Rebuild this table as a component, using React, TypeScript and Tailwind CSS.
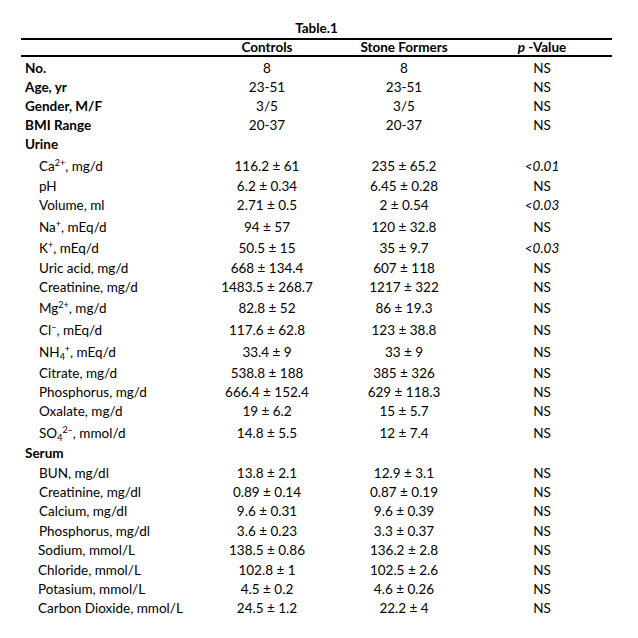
import React from "react";

type Row = {
  label: React.ReactNode;
  c?: string;
  s?: string;
  p?: string;
  h: number;
  kind: "bold" | "sub" | "sub2";
};

const Sup = ({ children }: { children: React.ReactNode }) => (
  <span className="relative -top-[5px] text-[9px] leading-none align-baseline">{children}</span>
);
const Sub = ({ children }: { children: React.ReactNode }) => (
  <span className="relative top-[3px] text-[9px] leading-none align-baseline">{children}</span>
);

const pm = "\u00b1";

const rows: Row[] = [
  { label: "No.", c: "8", s: "8", p: "NS", h: 19, kind: "bold" },
  { label: "Age, yr", c: "23-51", s: "23-51", p: "NS", h: 19, kind: "bold" },
  { label: "Gender, M/F", c: "3/5", s: "3/5", p: "NS", h: 19, kind: "bold" },
  { label: "BMI Range", c: "20-37", s: "20-37", p: "NS", h: 19, kind: "bold" },
  { label: "Urine", h: 22, kind: "bold" },
  { label: <>Ca<Sup>2+</Sup>, mg/d</>, c: `116.2 ${pm} 61`, s: `235 ${pm} 65.2`, p: "<0.01", h: 20, kind: "sub" },
  { label: "pH", c: `6.2 ${pm} 0.34`, s: `6.45 ${pm} 0.28`, p: "NS", h: 19, kind: "sub" },
  { label: "Volume, ml", c: `2.71 ${pm} 0.5`, s: `2 ${pm} 0.54`, p: "<0.03", h: 22, kind: "sub" },
  { label: <>Na<Sup>+</Sup>, mEq/d</>, c: `94 ${pm} 57`, s: `120 ${pm} 32.8`, p: "NS", h: 21, kind: "sub" },
  { label: <>K<Sup>+</Sup>, mEq/d</>, c: `50.5 ${pm} 15`, s: `35 ${pm} 9.7`, p: "<0.03", h: 20, kind: "sub" },
  { label: "Uric acid, mg/d", c: `668 ${pm} 134.4`, s: `607 ${pm} 118`, p: "NS", h: 19, kind: "sub" },
  { label: "Creatinine, mg/d", c: `1483.5 ${pm} 268.7`, s: `1217 ${pm} 322`, p: "NS", h: 21, kind: "sub" },
  { label: <>Mg<Sup>2+</Sup>, mg/d</>, c: `82.8 ${pm} 52`, s: `86 ${pm} 19.3`, p: "NS", h: 22, kind: "sub" },
  { label: <>Cl<Sup>&#8211;</Sup>, mEq/d</>, c: `117.6 ${pm} 62.8`, s: `123 ${pm} 38.8`, p: "NS", h: 22, kind: "sub" },
  { label: <>NH<Sub>4</Sub><Sup>+</Sup>, mEq/d</>, c: `33.4 ${pm} 9`, s: `33 ${pm} 9`, p: "NS", h: 21, kind: "sub" },
  { label: "Citrate, mg/d", c: `538.8 ${pm} 188`, s: `385 ${pm} 326`, p: "NS", h: 19, kind: "sub" },
  { label: "Phosphorus, mg/d", c: `666.4 ${pm} 152.4`, s: `629 ${pm} 118.3`, p: "NS", h: 19, kind: "sub" },
  { label: "Oxalate, mg/d", c: `19 ${pm} 6.2`, s: `15 ${pm} 5.7`, p: "NS", h: 22, kind: "sub" },
  { label: <>SO<Sub>4</Sub><Sup>2&#8211;</Sup>, mmol/d</>, c: `14.8 ${pm} 5.5`, s: `12 ${pm} 7.4`, p: "NS", h: 20, kind: "sub" },
  { label: "Serum", h: 20, kind: "bold" },
  { label: "BUN, mg/dl", c: `13.8 ${pm} 2.1`, s: `12.9 ${pm} 3.1`, p: "NS", h: 19, kind: "sub" },
  { label: "Creatinine, mg/dl", c: `0.89 ${pm} 0.14`, s: `0.87 ${pm} 0.19`, p: "NS", h: 19, kind: "sub" },
  { label: "Calcium, mg/dl", c: `9.6 ${pm} 0.31`, s: `9.6 ${pm} 0.39`, p: "NS", h: 20, kind: "sub" },
  { label: "Phosphorus, mg/dl", c: `3.6 ${pm} 0.23`, s: `3.3 ${pm} 0.37`, p: "NS", h: 19, kind: "sub" },
  { label: "Sodium, mmol/L", c: `138.5 ${pm} 0.86`, s: `136.2 ${pm} 2.8`, p: "NS", h: 20, kind: "sub2" },
  { label: "Chloride, mmol/L", c: `102.8 ${pm} 1`, s: `102.5 ${pm} 2.6`, p: "NS", h: 19, kind: "sub2" },
  { label: "Potasium, mmol/L", c: `4.5 ${pm} 0.2`, s: `4.6 ${pm} 0.26`, p: "NS", h: 19, kind: "sub2" },
  { label: "Carbon Dioxide, mmol/L", c: `24.5 ${pm} 1.2`, s: `22.2 ${pm} 4`, p: "NS", h: 19, kind: "sub2" },
];

const labelClass = {
  bold: "pl-[4px] font-bold",
  sub: "pl-[18px]",
  sub2: "pl-[17px]",
};

export default function App() {
  return (
    <div className="w-[638px] h-[638px] bg-white text-black text-[13.5px] font-['Lato',sans-serif] pt-[19px]">
      <div className="ml-[21px] w-[591px]">
        <div className="h-[19px] leading-[19px] text-center font-bold">Table.1</div>
        <div className="h-[2px] bg-black" />
        <div className="grid grid-cols-[179px_134px_140px_136px] h-[15px] leading-[15px] font-bold">
          <div />
          <div className="text-center">Controls</div>
          <div className="text-center">Stone Formers</div>
          <div className="text-center">
            <i>p</i> -Value
          </div>
        </div>
        <div className="h-[2px] bg-black" />
        <div className="pt-[2px]">
          {rows.map((r, i) => (
            <div
              key={i}
              className="grid grid-cols-[179px_134px_140px_136px] items-start leading-[19px]"
              style={{ height: r.h }}
            >
              <div className={"whitespace-nowrap " + labelClass[r.kind]}>{r.label}</div>
              <div className="text-center whitespace-nowrap">{r.c}</div>
              <div className="text-center whitespace-nowrap">{r.s}</div>
              <div className={"text-center " + (r.p && r.p !== "NS" ? "italic" : "")}>{r.p}</div>
            </div>
          ))}
        </div>
      </div>
    </div>
  );
}
